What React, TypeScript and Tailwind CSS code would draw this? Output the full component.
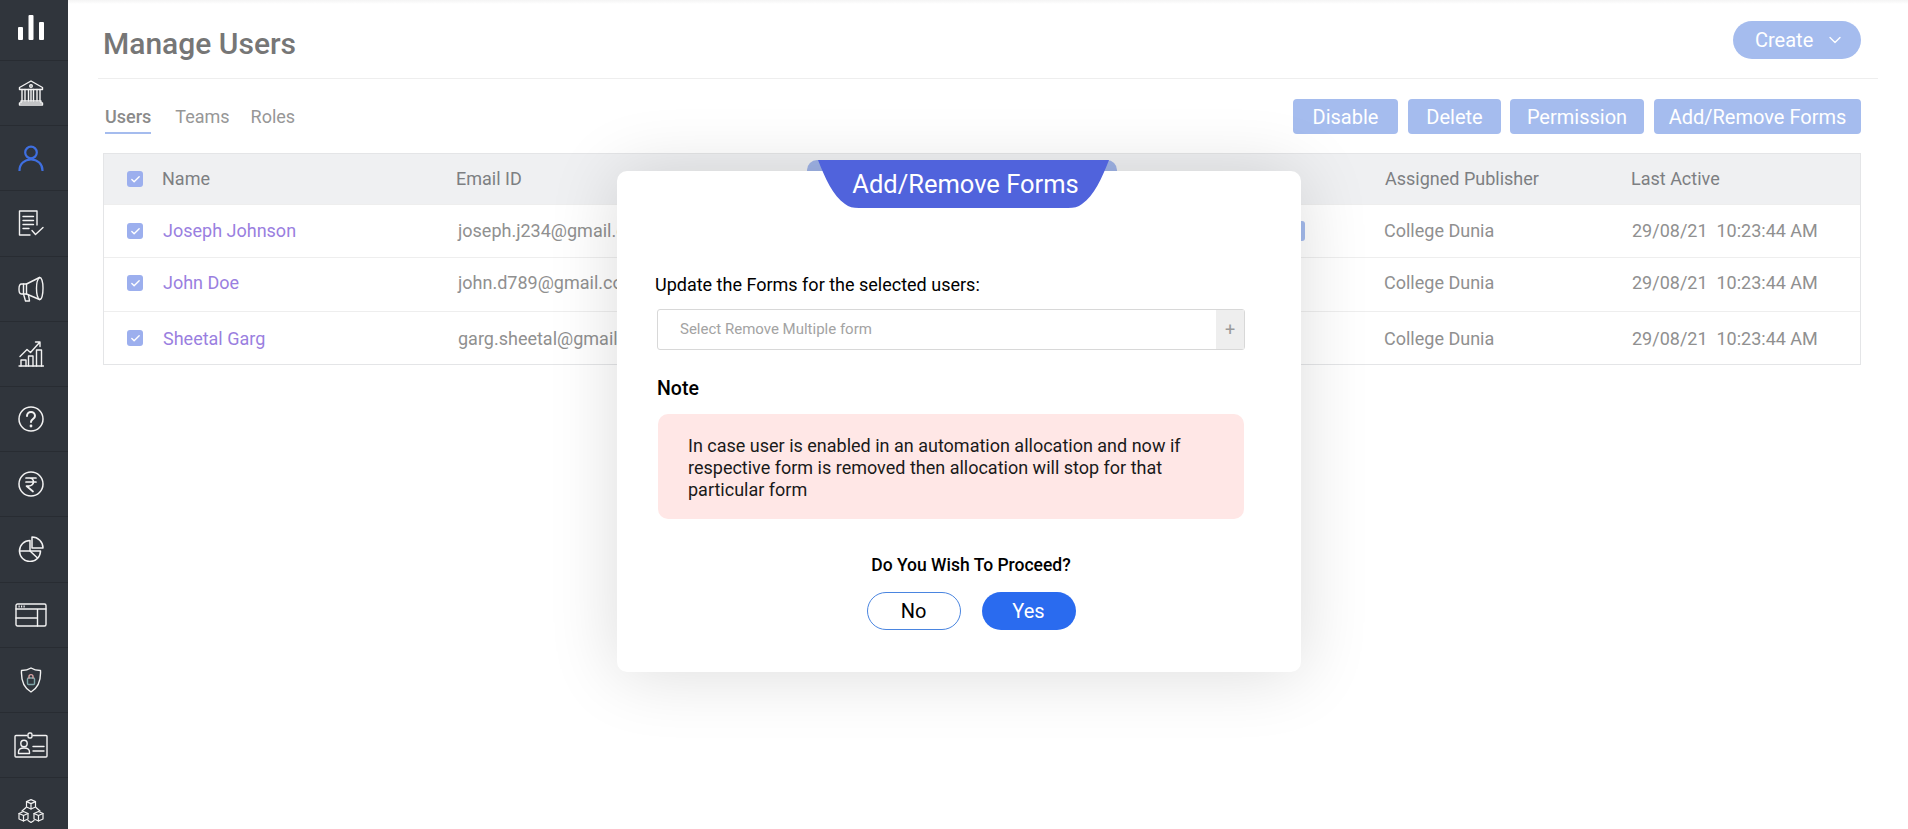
import React from 'react';
import { ChevronDown, Check } from 'lucide-react';

type IconProps = { className?: string };

const line = {
    fill: 'none',
    stroke: 'currentColor',
    strokeWidth: 1.4,
    strokeLinecap: 'round' as const,
    strokeLinejoin: 'round' as const,
};

const BarsIcon = () => (
    <svg width="26" height="26" viewBox="0 0 26 26" fill="#fff">
        <rect x="0" y="12" width="5" height="13" rx="1" />
        <rect x="10.5" y="0" width="5" height="25" rx="1" />
        <rect x="21" y="7" width="5" height="18" rx="1" />
    </svg>
);

const BankIcon = () => (
    <svg width="26" height="26" viewBox="0 0 26 26" {...line}>
        <path d="M13 1L1.5 7.5V9.5H24.5V7.5Z" />
        <circle cx="13" cy="6" r="1.3" />
        <path d="M4 9.5V21M7 9.5V21M10.5 9.5V21M13 9.5V21M15.5 9.5V21M19 9.5V21M22 9.5V21" />
        <path d="M3 21H23V23H3ZM1.5 23H24.5V25H1.5Z" />
    </svg>
);

const UserIcon = () => (
    <svg width="26" height="26" viewBox="0 0 26 26" fill="none" stroke="#3f6fe0" strokeWidth="2.2" strokeLinecap="round">
        <circle cx="13" cy="7.5" r="5.8" />
        <path d="M1.5 25.5C1.5 19 6.5 14.5 13 14.5S24.5 19 24.5 25.5" />
    </svg>
);

const FormCheckIcon = () => (
    <svg width="26" height="26" viewBox="0 0 26 26" {...line}>
        <path d="M19 15V1H1.5V25H12" />
        <path d="M5 6.5H15.5M5 10.5H15.5M5 14.5H15.5M5 18.5H11" />
        <path d="M14 20.5L17.5 24.5L25 17.5" />
    </svg>
);

const MegaphoneIcon = () => (
    <svg width="26" height="26" viewBox="0 0 26 26" {...line}>
        <path d="M8.5 8L21.5 1.5C23.5 1 25 6 25 12S24 24 21.5 23.5L8.5 18H3.5C1.5 18 1 16 1 13S1.5 8 3.5 8Z" />
        <path d="M21.5 1.5C19.5 3 18.5 8 18.5 12.5S19.5 22 21.5 23.5" />
        <path d="M8.5 8V18M5.5 8V18" />
        <path d="M5.5 18L7.5 25H11.5L10.5 19" />
    </svg>
);

const GrowthIcon = () => (
    <svg width="26" height="26" viewBox="0 0 26 26" {...line}>
        <path d="M1 25H25.5" />
        <path d="M3 25V19H8V25M10.5 25V15H15V25M18.5 25V9H23.5V25" />
        <path d="M2 15.5L9 8.5L12.5 11.5L21.5 1.5M17.5 1H22V5.5" />
    </svg>
);

const HelpIcon = () => (
    <svg width="26" height="26" viewBox="0 0 26 26" {...line} strokeWidth="1.5">
        <circle cx="13" cy="13" r="12" />
        <path d="M9 10C9 7.5 11 6 13 6S17 7.5 17 10C17 13 13 13 13 16" strokeWidth="2" />
        <circle cx="13" cy="20" r="0.6" strokeWidth="1.6" />
    </svg>
);

const RupeeIcon = () => (
    <svg width="26" height="26" viewBox="0 0 26 26" {...line} strokeWidth="1.5">
        <circle cx="13" cy="13" r="12" />
        <path d="M8 7H18M8 11H18M8 7H11.5C14 7 15.5 9 15.5 11S13.5 15 11 15H8.5L15 20.5" strokeWidth="1.7" />
    </svg>
);

const PieIcon = () => (
    <svg width="26" height="26" viewBox="0 0 26 26" {...line} strokeWidth="1.5">
        <path d="M12 4.5A10.5 10.5 0 1 0 22.5 15H12Z" />
        <path d="M1.5 15H12L19.5 22" />
        <path d="M14 1A11 11 0 0 1 25 12H14Z" />
    </svg>
);

const BrowserIcon = () => (
    <svg width="32" height="24" viewBox="0 0 32 24" {...line}>
        <rect x="1" y="1" width="30" height="22" rx="1.5" />
        <path d="M1 6H31M22.5 6V23M1 15H22.5" />
        <path d="M3.5 3.5H11" strokeDasharray="1.2 1.3" strokeLinecap="butt" strokeWidth="2" />
    </svg>
);

const ShieldIcon = () => (
    <svg width="22" height="26" viewBox="0 0 22 26" {...line}>
        <path d="M11 1C14 3 17.5 3.5 20.5 3.5C21 13 18 21 11 25C4 21 1 13 1.5 3.5C4.5 3.5 8 3 11 1Z" />
        <rect x="7.5" y="11" width="7" height="6.5" rx="1" stroke="#7fa5a8" />
        <path d="M9 11V9.5C9 7 13 7 13 9.5V11" stroke="#d9a3a3" />
    </svg>
);

const IdCardIcon = () => (
    <svg width="34" height="26" viewBox="0 0 34 26" {...line}>
        <path d="M13 3.5H2C1.4 3.5 1 3.9 1 4.5V24C1 24.6 1.4 25 2 25H32C32.6 25 33 24.6 33 24V4.5C33 3.9 32.6 3.5 32 3.5H19" />
        <rect x="14" y="1" width="4" height="5" rx="1.5" />
        <circle cx="10" cy="11.5" r="3.2" />
        <path d="M4.5 21.5V20C4.5 17.5 7 16 10 16S15.5 17.5 15.5 20V21.5Z" />
        <path d="M19 14.5H30M19 19H30" />
    </svg>
);

const CubesIcon = () => (
    <svg width="26" height="24" viewBox="0 0 26 24" className="mt-[2px]" {...line} strokeWidth="1.2">
        <path d="M13 .6L17.5 2.6V8L13 10L8.5 8V2.6Z" />
        <path d="M8.5 2.6L13 4.6L17.5 2.6M13 4.6V10" />
        <path d="M5.5 12.5L10 14.5V20L5.5 22L1 20V14.5Z" />
        <path d="M1 14.5L5.5 16.5L10 14.5M5.5 16.5V22" />
        <path d="M20.5 12.5L25 14.5V20L20.5 22L16 20V14.5Z" />
        <path d="M16 14.5L20.5 16.5L25 14.5M20.5 16.5V22" />
        <path d="M8 8.5L4 12M18 8.5L22 12M10 21.5L13 23.4L16 21.5" />
    </svg>
);

const navIcons = [
    <BarsIcon key="bars" />,
    <BankIcon key="bank" />,
    <UserIcon key="user" />,
    <FormCheckIcon key="forms" />,
    <MegaphoneIcon key="campaign" />,
    <GrowthIcon key="growth" />,
    <HelpIcon key="help" />,
    <RupeeIcon key="rupee" />,
    <PieIcon key="pie" />,
    <BrowserIcon key="browser" />,
    <ShieldIcon key="shield" />,
    <IdCardIcon key="id" />,
    <CubesIcon key="cubes" />,
];

const users = [
    { name: 'Joseph Johnson', email: 'joseph.j234@gmail.com', rowClass: 'h-[53px]', textClass: 'mb-[2px]' },
    { name: 'John Doe', email: 'john.d789@gmail.com', rowClass: 'h-[54px] pb-[3px]', textClass: 'mb-[2px]' },
    { name: 'Sheetal Garg', email: 'garg.sheetal@gmail.com', rowClass: 'h-[53px]', textClass: '' },
];

const actions = [
    { label: 'Disable', width: 'w-[105px]' },
    { label: 'Delete', width: 'ml-px w-[93px]' },
    { label: 'Permission', width: 'w-[134px]' },
    { label: 'Add/Remove Forms', width: 'ml-px w-[207px]' },
];

const TableCheck: React.FC<IconProps> = ({ className }) => (
    <span className={`flex h-4 w-4 items-center justify-center rounded-[3px] bg-[#9cafee] ${className ?? ''}`}>
        <Check size={11} strokeWidth={3} color="#fff" />
    </span>
);

export default function App() {
    return (
        <div className="relative flex h-screen w-full overflow-hidden bg-white font-['Roboto',sans-serif]">
            <aside className="flex h-full w-[68px] shrink-0 flex-col bg-[#30353c] text-[#f2f2f2]">
                {navIcons.map((icon, i) => (
                    <div
                        key={i}
                        className={`flex shrink-0 items-center justify-center border-b border-[#282c32] pr-[7px] ${i === 0 ? 'h-[61px] pb-1' : 'h-[65.2px]'}`}
                    >
                        {icon}
                    </div>
                ))}
            </aside>

            <main className="flex min-w-0 flex-1 flex-col">
                <div className="h-1 shrink-0 bg-gradient-to-b from-[#f4f4f4] to-white" />
                <header className="mx-[30px] flex h-[75px] shrink-0 items-start justify-between border-b border-[#eeeeee] pl-[5px] pr-[17px]">
                    <h1 className="mt-[21px] text-[30px] font-medium leading-[38px] text-[#767676]">Manage Users</h1>
                    <button className="mt-[17px] flex h-[38px] w-[128px] items-center rounded-full bg-[#a5bcee] pl-[22px] text-[20px] text-white">
                        Create
                        <ChevronDown size={20} strokeWidth={1.6} className="ml-[12px]" />
                    </button>
                </header>

                <div className="mt-5 flex shrink-0 items-start justify-between pl-[37px] pr-[47px]">
                    <nav className="flex gap-6 text-[18px] leading-[35px] text-[#979797]">
                        <a className="h-[35px] border-b-2 border-[#a5bcee] font-medium text-[#8a8a8a]">Users</a>
                        <a>Teams</a>
                        <a className="-ml-[3px]">Roles</a>
                    </nav>
                    <div className="flex gap-[9px]">
                        {actions.map((a) => (
                            <button key={a.label} className={`h-[35px] rounded-[4px] bg-[#a5bcee] text-[20px] text-white ${a.width}`}>
                                {a.label}
                            </button>
                        ))}
                    </div>
                </div>

                <div className="ml-[35px] mr-[47px] mt-[19px] border border-[#e4e5e7] text-[18px]">
                    <div className="flex h-[50px] items-center bg-[#eff0f2] text-[#7d7f82]">
                        <TableCheck className="ml-[23px] mr-[19px]" />
                        <span className="mb-[2px] w-[294px]">Name</span>
                        <span className="mb-[2px] w-[929px]">Email ID</span>
                        <span className="mb-[2px] w-[246px]">Assigned Publisher</span>
                        <span className="mb-[2px]">Last Active</span>
                    </div>
                    {users.map((u) => (
                        <div key={u.name} className={`relative flex items-center border-t border-[#eeeeee] text-[#909090] ${u.rowClass}`}>
                            <TableCheck className="ml-[23px] mr-[20px]" />
                            <span className={`w-[295px] text-[#9a7fe0] ${u.textClass}`}>{u.name}</span>
                            <span className={`w-[926px] ${u.textClass}`}>{u.email}</span>
                            <span className={`w-[248px] ${u.textClass}`}>College Dunia</span>
                            <span className={`whitespace-pre ${u.textClass}`}>29/08/21  10:23:44 AM</span>
                        </div>
                    ))}
                </div>
            </main>

            {/* status tag peeking out from behind the dialog */}
            <div className="absolute left-[1280px] top-[221px] h-5 w-[25px] rounded-[3px] bg-[#a5bcee]" />

            <div className="absolute left-[807px] top-[160px] h-6 w-[310px] rounded-t-[10px] bg-[#9fb3e6]" />

            <section className="absolute left-[617px] top-[171px] flex h-[501px] w-[684px] flex-col rounded-[10px] bg-white pl-[40px] pr-[57px] text-black shadow-[0_2px_70px_rgba(0,0,0,0.14)]">
                <div className="absolute left-[201px] top-[-11px] h-[48px] w-[291px]">
                    <svg className="absolute inset-0" width="291" height="48" viewBox="0 0 291 48" fill="#5063dc">
                        <path d="M0 0H291C284 18 276 36 264 44C260 47 256 48 250 48H41C35 48 31 47 27 44C15 36 7 18 0 0Z" />
                    </svg>
                    <h2 className="relative pl-[4px] pt-[6px] text-center text-[25.5px] leading-[36px] text-white">Add/Remove Forms</h2>
                </div>

                <p className="ml-[-2px] mt-[103px] text-[18px] leading-[22px]">Update the Forms for the selected users:</p>
                <div className="mt-[13px] flex h-[41px] w-[588px] items-center rounded-[3px] border border-[#d8d8d8]">
                    <span className="flex-1 pl-[22px] text-[15px] text-[#a3a3a3]">Select Remove Multiple form</span>
                    <span className="flex h-full w-[28px] items-center justify-center bg-[#eeeeee] text-[18px] text-[#9a9a9a]">+</span>
                </div>
                <p className="mt-[26px] text-[19.5px] font-medium leading-[26px]">Note</p>
                <div className="ml-px mt-[12px] h-[105px] w-[586px] rounded-[10px] bg-[#ffe7e6] pl-[30px] pr-[50px] pt-[21px] text-[18px] leading-[22px] text-[#1a1a1a]">
                    In case user is enabled in an automation allocation and now if respective form is removed then allocation will stop for that particular form
                </div>
                <p className="mt-[35px] pl-[41px] text-center text-[17.5px] font-medium leading-[22px]">Do You Wish To Proceed?</p>
                <div className="mt-[16px] flex justify-center gap-[21px] pl-[41px]">
                    <button className="h-[38px] w-[94px] rounded-full border border-[#4a85e0] text-[20px] text-black">No</button>
                    <button className="h-[38px] w-[94px] rounded-full bg-[#2a6bef] text-[20px] text-white">Yes</button>
                </div>
            </section>
        </div>
    );
}
